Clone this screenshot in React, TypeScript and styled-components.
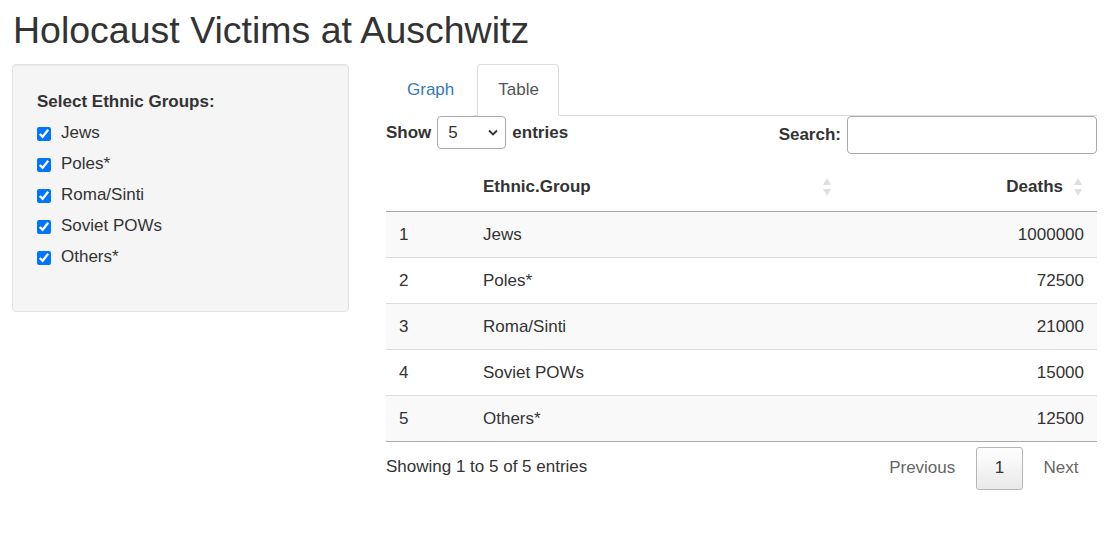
import React from "react";
import styled, { createGlobalStyle } from "styled-components";

const Global = createGlobalStyle`
  html, body { margin: 0; padding: 0; background: #fff; }
  body {
    font-family: "Liberation Sans", Arial, sans-serif;
    font-size: 17px;
    line-height: 24px;
    color: #333;
  }
  * { box-sizing: border-box; }
`;

const Page = styled.div`
  padding: 0 8px 0 12px;
`;

const Title = styled.h1`
  margin: 10px 0 13px 1px;
  font-size: 37.5px;
  line-height: 41px;
  font-weight: 400;
  color: #333;
`;

const Layout = styled.div`
  display: grid;
  grid-template-columns: 337px 1fr;
  column-gap: 37px;
  align-items: start;
`;

const Well = styled.div`
  background: #f5f5f5;
  border: 1px solid #e3e3e3;
  border-radius: 4px;
  padding: 25px 24px 40px 24px;
  height: 248px;
  box-shadow: inset 0 1px 1px rgba(0, 0, 0, 0.05);
`;

const GroupLabel = styled.div`
  font-weight: 700;
  margin-bottom: 3px;
`;

const CheckRow = styled.label`
  display: flex;
  align-items: center;
  height: 31px;
  gap: 10px;
  cursor: pointer;
`;

const Check = styled.input`
  width: 14px;
  height: 14px;
  margin: 2px 0 0 0;
  accent-color: #0075ff;
`;

const Main = styled.div`
  min-width: 0;
`;

const Tabs = styled.ul`
  display: flex;
  margin: 0;
  padding: 0;
  list-style: none;
  border-bottom: 1px solid #ddd;
`;

const TabItem = styled.li<{ $active?: boolean }>`
  margin-bottom: -1px;
  margin-right: 3px;
  padding: 13px 19px 13px 20px;
  border: 1px solid ${(p) => (p.$active ? "#ddd" : "transparent")};
  border-bottom-color: ${(p) => (p.$active ? "#fff" : "transparent")};
  border-radius: 4px 4px 0 0;
  background: #fff;
  color: ${(p) => (p.$active ? "#555" : "#337ab7")};
  line-height: 24px;
`;

const Controls = styled.div`
  display: flex;
  justify-content: space-between;
  align-items: flex-start;
  margin-bottom: 9px;
`;

const LengthBox = styled.div`
  display: flex;
  align-items: center;
  height: 33px;
  font-weight: 700;
  gap: 6px;
`;

const SelectWrap = styled.span`
  position: relative;
  display: inline-flex;
`;

const Select = styled.select`
  appearance: none;
  -webkit-appearance: none;
  width: 69px;
  height: 33px;
  padding: 0 0 0 10px;
  border: 1px solid #aaa;
  border-radius: 4px;
  background: #fff;
  font-family: inherit;
  font-size: 17px;
  color: #333;
`;

const Chevron = styled.svg`
  position: absolute;
  right: 8px;
  top: 13px;
  pointer-events: none;
`;

const SearchBox = styled.label`
  display: flex;
  align-items: center;
  gap: 6px;
  font-weight: 700;
  height: 38px;
`;

const SearchInput = styled.input`
  width: 250px;
  height: 38px;
  border: 1px solid #aaa;
  border-radius: 4px;
  background: #fff;
  padding: 0 6px;
  font-family: inherit;
  font-size: 17px;
`;

const Table = styled.table`
  width: 100%;
  table-layout: fixed;
  border-collapse: collapse;
`;

const Th = styled.th<{ $right?: boolean }>`
  position: relative;
  text-align: ${(p) => (p.$right ? "right" : "left")};
  font-weight: 700;
  padding: 12px 34px 12px 13px;
  line-height: 24px;
  border-bottom: 1px solid #aaa;
`;

const SortIcon = styled.svg`
  position: absolute;
  right: 14px;
  top: 15px;
`;

const Tr = styled.tr<{ $striped?: boolean }>`
  background: ${(p) => (p.$striped ? "#f9f9f9" : "#fff")};
  &:last-child td {
    border-bottom: 1px solid #aaa;
  }
`;

const Td = styled.td<{ $right?: boolean }>`
  text-align: ${(p) => (p.$right ? "right" : "left")};
  padding: 11px 13px 10px 13px;
  line-height: 24px;
  border-top: 1px solid #ddd;
`;

const Footer = styled.div`
  display: flex;
  justify-content: space-between;
  align-items: flex-start;
`;

const Info = styled.div`
  padding-top: 12.7px;
`;

const Pager = styled.div`
  display: flex;
  padding-top: 5px;
`;

const PageButton = styled.span<{ $current?: boolean }>`
  display: inline-block;
  min-width: 25px;
  padding: 8.4px 17.5px;
  margin-left: 2.4px;
  line-height: 24px;
  text-align: center;
  border: 1px solid ${(p) => (p.$current ? "#b5b5b5" : "transparent")};
  border-radius: 3px;
  color: ${(p) => (p.$current ? "#333" : "#666")};
  background: ${(p) =>
    p.$current ? "linear-gradient(to bottom, #ffffff 0%, #e9e9e9 100%)" : "transparent"};
`;

const groups = ["Jews", "Poles*", "Roma/Sinti", "Soviet POWs", "Others*"];
const rows: [string, number][] = [
  ["Jews", 1000000],
  ["Poles*", 72500],
  ["Roma/Sinti", 21000],
  ["Soviet POWs", 15000],
  ["Others*", 12500],
];

const Sort = () => (
  <SortIcon width="10" height="19" viewBox="0 0 10 19">
    <polygon points="5,0 9,7 1,7" fill="#e0e0e0" />
    <polygon points="1,11 9,11 5,18" fill="#e0e0e0" />
  </SortIcon>
);

export default function App() {
  return (
    <Page>
      <Global />
      <Title>Holocaust Victims at Auschwitz</Title>
      <Layout>
        <Well>
          <GroupLabel>Select Ethnic Groups:</GroupLabel>
          {groups.map((g) => (
            <CheckRow key={g}>
              <Check type="checkbox" defaultChecked />
              <span>{g}</span>
            </CheckRow>
          ))}
        </Well>
        <Main>
          <Tabs>
            <TabItem>Graph</TabItem>
            <TabItem $active>Table</TabItem>
          </Tabs>
          <Controls>
            <LengthBox>
              <span>Show</span>
              <SelectWrap>
                <Select defaultValue="5">
                  <option value="5">5</option>
                  <option value="10">10</option>
                </Select>
                <Chevron width="10" height="7" viewBox="0 0 10 7">
                  <polyline points="1,1.5 5,5.5 9,1.5" fill="none" stroke="#333" strokeWidth="1.8" />
                </Chevron>
              </SelectWrap>
              <span>entries</span>
            </LengthBox>
            <SearchBox>
              <span>Search:</span>
              <SearchInput type="search" />
            </SearchBox>
          </Controls>
          <Table>
            <colgroup>
              <col style={{ width: 84 }} />
              <col style={{ width: 376 }} />
              <col />
            </colgroup>
            <thead>
              <tr>
                <Th></Th>
                <Th>
                  Ethnic.Group
                  <Sort />
                </Th>
                <Th $right>
                  Deaths
                  <Sort />
                </Th>
              </tr>
            </thead>
            <tbody>
              {rows.map(([name, deaths], i) => (
                <Tr key={name} $striped={i % 2 === 0}>
                  <Td>{i + 1}</Td>
                  <Td>{name}</Td>
                  <Td $right>{deaths}</Td>
                </Tr>
              ))}
            </tbody>
          </Table>
          <Footer>
            <Info>Showing 1 to 5 of 5 entries</Info>
            <Pager>
              <PageButton>Previous</PageButton>
              <PageButton $current>1</PageButton>
              <PageButton>Next</PageButton>
            </Pager>
          </Footer>
        </Main>
      </Layout>
    </Page>
  );
}
